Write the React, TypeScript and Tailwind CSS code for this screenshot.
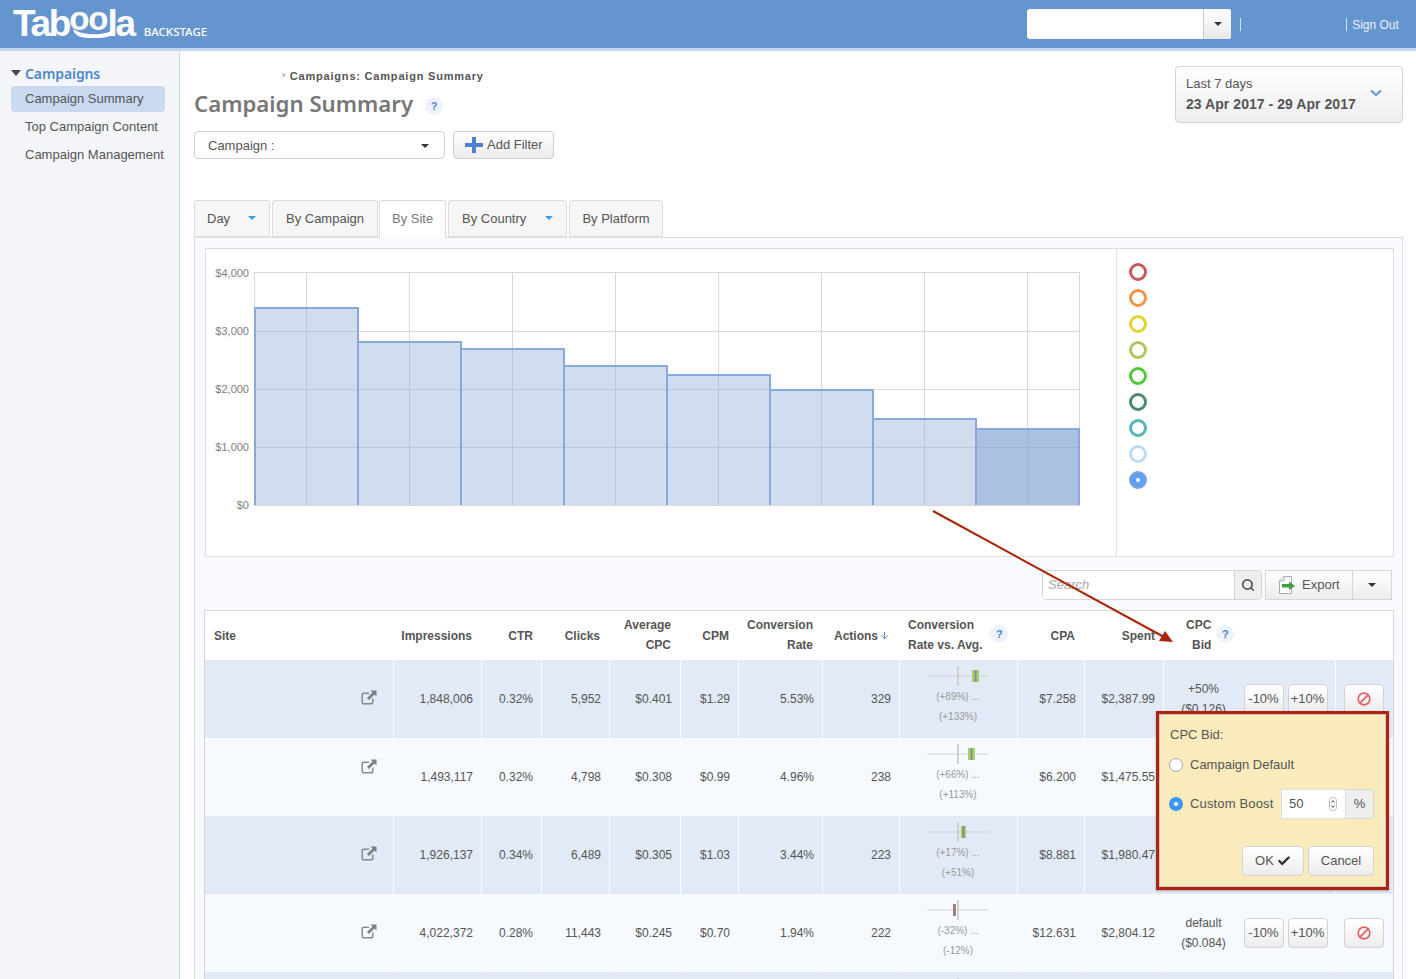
import { Search, Ban, Check, ArrowDown } from 'lucide-react'

const legend = ['#c85a5f', '#f0954a', '#e4d22f', '#a9c95f', '#4fc93a', '#4a8a68', '#56b9b8', '#bcdcf6']

const bars = [
  { x: 255, top: 308 },
  { x: 358, top: 342 },
  { x: 461, top: 349 },
  { x: 564, top: 366 },
  { x: 667, top: 375 },
  { x: 770, top: 390 },
  { x: 873, top: 419 },
  { x: 976, top: 429 },
]

const rows = [
  { imp: '1,848,006', ctr: '0.32%', clicks: '5,952', cpc: '$0.401', cpm: '$1.29', rate: '5.53%', actions: '329', low: '(+89%) ...', high: '(+133%)', box: 45, boxW: 7, boxColor: '#a5d16a', cpa: '$7.258', spent: '$2,387.99', bid: '+50%', bidVal: '($0.126)', icon: 'pb-[3px]' },
  { imp: '1,493,117', ctr: '0.32%', clicks: '4,798', cpc: '$0.308', cpm: '$0.99', rate: '4.96%', actions: '238', low: '(+66%) ...', high: '(+113%)', box: 41, boxW: 7, boxColor: '#a5d16a', cpa: '$6.200', spent: '$1,475.55', icon: 'pb-[21px]' },
  { imp: '1,926,137', ctr: '0.34%', clicks: '6,489', cpc: '$0.305', cpm: '$1.03', rate: '3.44%', actions: '223', low: '(+17%) ...', high: '(+51%)', box: 34, boxW: 5, boxColor: '#a5d16a', cpa: '$8.881', spent: '$1,980.47', icon: 'pb-[3px]' },
  { imp: '4,022,372', ctr: '0.28%', clicks: '11,443', cpc: '$0.245', cpm: '$0.70', rate: '1.94%', actions: '222', low: '(-32%) ...', high: '(-12%)', box: 26, boxW: 3, boxColor: '#c4686a', cpa: '$12.631', spent: '$2,804.12', bid: 'default', bidVal: '($0.084)', icon: 'pb-[3px]' },
]

const MiniChart = ({ box, boxW, boxColor }: { box: number; boxW: number; boxColor: string }) => (
  <svg width="62" height="22" viewBox="0 0 62 22" className="mx-auto block">
    <line x1="0" y1="11" x2="62" y2="11" stroke="#cfcfcf" />
    <line x1="31" y1="1" x2="31" y2="21" stroke="#cfcfcf" strokeWidth="2" />
    <rect x={box} y="5" width={boxW} height="12" fill={boxColor} />
    <rect x={box + boxW / 2 - 1} y="5" width="2" height="12" fill="#8a8f8a" />
  </svg>
)

const LinkIcon = () => (
  <svg width="16" height="15" viewBox="0 0 16 15">
    <path d="M8 3.2 H3 Q1.2 3.2 1.2 5 V12 Q1.2 13.8 3 13.8 H10 Q11.8 13.8 11.8 12 V8.5" fill="none" stroke="#8a8a8a" strokeWidth="1.5" />
    <path d="M9.5 .5 H15.5 V6.5 L13.4 4.5 L8 10 L6 8 L11.5 2.5 Z" fill="#7f7f7f" />
  </svg>
)

const Help = () => (
  <span className="inline-flex h-[18px] w-[18px] items-center justify-center rounded-full bg-[#edf2fb] text-[11px] font-bold text-[#4a7fd6]">?</span>
)

const Caret = ({ color = 'border-t-[#333]' }: { color?: string }) => (
  <span className={`inline-block h-0 w-0 border-x-[4px] border-t-[4px] border-x-transparent ${color}`} />
)

const SmallButton = ({ children, className = '' }: { children: React.ReactNode; className?: string }) => (
  <button className={`flex h-[30px] items-center justify-center rounded-[4px] border border-[#d2d2d2] bg-gradient-to-b from-white to-[#ececec] text-[13px] text-[#555] ${className}`}>
    {children}
  </button>
)

const Tab = ({ label, width, active, caret }: { label: string; width: string; active?: boolean; caret?: boolean }) => (
  <div className={`flex items-center justify-between whitespace-nowrap rounded-t-[3px] border border-[#dddddd] px-[12px] text-[13px] ${width} ${active ? 'h-[38px] -mb-[1px] border-b-[#f8faff] bg-white text-[#777]' : 'h-[37px] bg-[#f6f6f6] text-[#555]'}`}>
    <span>{label}</span>
    {caret && <span className="mb-[1px] mr-[1px] flex"><Caret color="border-t-[#3d9be0]" /></span>}
  </div>
)

const Th = ({ children, className = '' }: { children: React.ReactNode; className?: string }) => (
  <th className={`pr-[9px] text-right align-middle text-[12px] font-bold leading-[20px] text-[#555] ${className}`}>{children}</th>
)

const Td = ({ children, className = '' }: { children: React.ReactNode; className?: string }) => (
  <td className={`border-r border-white/80 pr-[7.5px] text-right align-middle text-[12px] text-[#555] ${className}`}>{children}</td>
)

export default function App() {
  return (
    <div className="relative h-[979px] w-[1416px] overflow-hidden bg-white font-['Liberation_Sans',sans-serif] text-[#555]">
      {/* Header */}
      <header className="flex h-[51px] items-start border-b-[3px] border-[#c3d5ec] bg-[#6595ce]">
        <div className="relative ml-[13px] mt-[4px] flex h-[40px] items-start text-[37px] font-bold leading-[40px] tracking-[-2.3px] text-white">
          <span>Tab</span>
          <span className="-mt-[5px] text-[33px] tracking-[-1px]">oo</span>
          <span>la</span>
          <svg width="46" height="12" viewBox="0 0 46 12" className="absolute left-[58px] top-[23px]">
            <path d="M2 2 C12 9 34 9 44 2 C42 10 36 11 23 11 C10 11 4 10 2 2 Z" fill="white" />
          </svg>
        </div>
        <span className="ml-[10px] mt-[24px] font-['Noto_Sans',sans-serif] text-[11.5px] font-medium leading-[16px] text-white">BACKSTAGE</span>
        <div className="ml-[820px] mt-[9px] flex h-[30px] w-[204px] overflow-hidden rounded-[3px] bg-white">
          <div className="flex-1" />
          <div className="flex w-[28px] items-center justify-center border-l border-[#cccccc] bg-gradient-to-b from-white to-[#e8e8e8]">
            <Caret />
          </div>
        </div>
        <span className="ml-[9px] mt-[18px] h-[13px] w-px bg-[#d5e2f2]" />
        <span className="ml-[105px] mt-[18px] h-[13px] w-px bg-[#d5e2f2]" />
        <span className="ml-[5px] mt-[17px] text-[12px] leading-[16px] text-[#e9f0f9]">Sign Out</span>
      </header>

      <div className="flex">
        {/* Sidebar */}
        <aside className="h-[928px] w-[180px] shrink-0 border-r border-[#c9d9ec] bg-[#f4f5f8] pl-[11px] pt-[12px]">
          <div className="flex h-[20px] items-center">
            <span className="h-0 w-0 border-x-[5px] border-t-[6px] border-x-transparent border-t-[#444]" />
            <span className="ml-[4px] font-['Noto_Sans',sans-serif] text-[14px] font-semibold tracking-[-0.1px] text-[#4e88cf]">Campaigns</span>
          </div>
          <div className="mt-[3px] flex h-[26px] w-[154px] items-center rounded-[4px] bg-[#c9d9f0] pl-[14px] text-[13px]">Campaign Summary</div>
          <div className="mt-[2px] flex h-[26px] items-center pl-[14px] text-[13px]">Top Campaign Content</div>
          <div className="mt-[2px] flex h-[26px] items-center pl-[14px] text-[13px]">Campaign Management</div>
        </aside>

        {/* Main */}
        <main className="w-[1236px] pl-[14px] pr-[13px]">
          <div className="flex h-[149px] justify-between pt-[15px]">
            <div>
              <div className="ml-[88px] flex h-[20px] items-center text-[11px] font-bold tracking-[0.8px] text-[#555]">
                <span className="mr-[4px] text-[9px] font-normal">›</span>Campaigns: Campaign Summary
              </div>
              <div className="mt-[1px] flex h-[34px] items-center">
                <h1 className="font-['Noto_Sans',sans-serif] text-[22.2px] font-semibold leading-[34px] text-[#777]">Campaign Summary</h1>
                <span className="ml-[12px] mt-[2px]"><Help /></span>
              </div>
              <div className="mt-[10px] flex gap-[8px]">
                <div className="flex h-[28px] w-[251px] items-center justify-between rounded-[4px] border border-[#cfcfcf] bg-white pl-[13px] pr-[15px] pt-[1px] text-[13px]">
                  <span>Campaign :</span>
                  <Caret />
                </div>
                <button className="flex h-[28px] w-[101px] items-center rounded-[4px] border border-[#cfcfcf] bg-gradient-to-b from-white to-[#ececec] pl-[11px] text-[13px] text-[#555]">
                  <svg width="18" height="16" viewBox="0 0 18 16" className="mr-[4px]">
                    <path d="M7 0h4v6h7v4h-7v6H7v-6H0V6h7z" fill="#4f80cf" />
                  </svg>
                  Add Filter
                </button>
              </div>
            </div>
            <div className="flex h-[57px] w-[228px] items-center justify-between rounded-[4px] border border-[#d5d5d5] bg-gradient-to-b from-white to-[#eeeeee] pl-[10px] pr-[20px]">
              <div className="-mt-[2px]">
                <div className="text-[13px] leading-[21px]">Last 7 days</div>
                <div className="text-[14px] font-bold leading-[21px] tracking-[0.05px]">23 Apr 2017 - 29 Apr 2017</div>
              </div>
              <svg width="12" height="8" viewBox="0 0 12 8" className="mb-[3px]">
                <path d="M1 1.5 L6 6 L11 1.5" fill="none" stroke="#5b95d6" strokeWidth="2" />
              </svg>
            </div>
          </div>

          {/* Tabs */}
          <div className="flex gap-[2px]">
            <Tab label="Day" width="w-[76px]" caret />
            <Tab label="By Campaign" width="w-[106px] !px-[11px] justify-center" />
            <div className="-ml-px"><Tab label="By Site" width="w-[67px]" active /></div>
            <Tab label="By Country" width="w-[119px] !pl-[13px]" caret />
            <Tab label="By Platform" width="w-[94px] justify-center" />
          </div>

          <section className="h-[800px] border border-[#dddddd] bg-[#f8faff] pl-[10px] pr-[9px] pt-[10px]">
            {/* Chart */}
            <div className="flex h-[309px] w-[1189px] border border-[#dedede] bg-white">
              <svg width="910" height="307" viewBox="206 249 910 307" className="shrink-0 font-['Liberation_Sans',sans-serif]">
                {[272, 331, 389, 447, 505].map((y) => (
                  <line key={y} x1="254" x2="1080" y1={y + 0.5} y2={y + 0.5} stroke="#d8d8d8" />
                ))}
                {[254, 306, 409, 512, 615, 718, 821, 924, 1027, 1079].map((x) => (
                  <line key={x} x1={x + 0.5} x2={x + 0.5} y1="272" y2="505" stroke="#d8d8d8" />
                ))}
                {bars.map((b, i) => (
                  <g key={b.x}>
                    <rect x={b.x} y={b.top} width="103" height={505 - b.top} fill={i === 7 ? '#7d9fd3' : '#99b3dc'} fillOpacity={i === 7 ? 0.65 : 0.45} />
                    <path d={`M${b.x} 505 V${b.top} H${b.x + 103} V505`} fill="none" stroke="#88a9db" strokeWidth="2" />
                  </g>
                ))}
                {[['$4,000', 277], ['$3,000', 335], ['$2,000', 393], ['$1,000', 451], ['$0', 509]].map(([t, y]) => (
                  <text key={t} x="249" y={y} textAnchor="end" fontSize="11" fill="#808080">{t}</text>
                ))}
              </svg>
              <div className="flex-1 border-l border-[#e2e2e2] pl-[12px] pt-[14px]">
                <div className="flex flex-col gap-[8px]">
                  {legend.map((c) => (
                    <span key={c} className="h-[18px] w-[18px] rounded-full border-[3.5px] bg-white" style={{ borderColor: c }} />
                  ))}
                  <span className="flex h-[18px] w-[18px] items-center justify-center rounded-full border-[2px] border-[#7e9fdb] bg-[#5da0f5]">
                    <span className="h-[4px] w-[4px] rounded-full bg-white" />
                  </span>
                </div>
              </div>
            </div>

            {/* Toolbar */}
            <div className="mt-[13px] flex h-[30px] w-[1187px] justify-end gap-[3px]">
              <div className="flex w-[220px] overflow-hidden rounded-[4px] border border-[#d5d5d5] bg-white">
                <input placeholder="Search" className="w-[191px] bg-white pl-[5px] text-[13px] italic outline-none placeholder:text-[#aaaaaa]" />
                <div className="flex flex-1 items-center justify-center border-l border-[#d5d5d5] bg-[#efefef]">
                  <Search size={14} strokeWidth={3} color="#555" />
                </div>
              </div>
              <div className="flex w-[127px] border border-[#d5d5d5] bg-gradient-to-b from-white to-[#ececec]">
                <div className="flex w-[87px] items-center border-r border-[#d5d5d5] pl-[12px] text-[13px]">
                  <svg width="18" height="18" viewBox="0 0 18 18" className="mr-[6px] shrink-0">
                    <path d="M1.5 5 L6 .5 H13.5 V17.5 H1.5 Z" fill="white" stroke="#aaa" />
                    <path d="M6 .5 V5 H1.5" fill="none" stroke="#aaa" />
                    <path d="M4 8 H11 V5.5 L17 10 L11 14 V11.5 H4 Z" fill="#3fa13c" />
                  </svg>
                  Export
                </div>
                <div className="flex flex-1 items-center justify-center"><Caret /></div>
              </div>
            </div>

            {/* Table */}
            <div className="-ml-px mt-[10px] w-[1190px] border border-[#d6d6d6] bg-white">
              <table className="w-[1188px] table-fixed border-collapse">
                <colgroup>
                  <col className="w-[188px]" />
                  <col className="w-[88px]" />
                  <col className="w-[60px]" />
                  <col className="w-[68px]" />
                  <col className="w-[71px]" />
                  <col className="w-[58px]" />
                  <col className="w-[84px]" />
                  <col className="w-[77px]" />
                  <col className="w-[118px]" />
                  <col className="w-[67px]" />
                  <col className="w-[79px]" />
                  <col className="w-[172px]" />
                  <col className="w-[58px]" />
                </colgroup>
                <thead>
                  <tr className="h-[49px]">
                    <Th className="pl-[9px] !text-left">Site</Th>
                    <Th>Impressions</Th>
                    <Th className="!pr-[8px]">CTR</Th>
                    <Th>Clicks</Th>
                    <Th className="pb-[2px]">Average<br />CPC</Th>
                    <Th>CPM</Th>
                    <Th className="pb-[2px]">Conversion<br />Rate</Th>
                    <Th className="!pr-[9px]">
                      <span className="inline-flex items-center">Actions<ArrowDown size={11} color="#4e88cf" className="ml-[1px]" /></span>
                    </Th>
                    <Th className="!pr-0 !text-left pb-[2px]">
                      <div className="flex items-center pl-[9px]">
                        <span>Conversion<br />Rate vs. Avg.</span>
                        <span className="ml-[8px] -mt-[1px]"><Help /></span>
                      </div>
                    </Th>
                    <Th>CPA</Th>
                    <Th className="!pr-[8px]">Spent</Th>
                    <Th className="!pr-0 pb-[2px]">
                      <div className="flex items-center pl-[23px]">
                        <span className="text-right">CPC<br />Bid</span>
                        <span className="ml-[5px] -mt-[1px]"><Help /></span>
                      </div>
                    </Th>
                    <Th> </Th>
                  </tr>
                </thead>
                <tbody>
                  {rows.map((r, i) => (
                    <tr key={r.imp} className={`h-[78px] ${i % 2 === 0 ? 'bg-[#e1eaf6]' : 'bg-[#f6f9fe]'}`}>
                      <Td>
                        <div className={`flex justify-end pr-[8px] ${r.icon}`}>
                          <LinkIcon />
                        </div>
                      </Td>
                      <Td>{r.imp}</Td>
                      <Td>{r.ctr}</Td>
                      <Td>{r.clicks}</Td>
                      <Td>{r.cpc}</Td>
                      <Td>{r.cpm}</Td>
                      <Td>{r.rate}</Td>
                      <Td>{r.actions}</Td>
                      <Td className="!pr-0 !pt-[5px] !align-top !text-center">
                        <MiniChart box={r.box} boxW={r.boxW} boxColor={r.boxColor} />
                        <div className="text-[10px] leading-[20px] text-[#999]">{r.low}<br />{r.high}</div>
                      </Td>
                      <Td>{r.cpa}</Td>
                      <Td>{r.spent}</Td>
                      <Td className="!pr-0">
                        {r.bid && (
                          <div className="flex items-center">
                            <div className="w-[80px] text-center leading-[20px]">{r.bid}<br />{r.bidVal}</div>
                            <div className="flex gap-[4px]">
                              <SmallButton className="w-[40px]">-10%</SmallButton>
                              <SmallButton className="w-[40px]">+10%</SmallButton>
                            </div>
                          </div>
                        )}
                      </Td>
                      <td className="align-middle">
                        {r.bid && (
                          <SmallButton className="ml-[8px] w-[40px]"><Ban size={14} strokeWidth={3} color="#e5626c" className="-scale-x-100" /></SmallButton>
                        )}
                      </td>
                    </tr>
                  ))}
                  <tr className="h-[78px] bg-[#e1eaf6]">
                    <td colSpan={8} />
                    <td className="align-top pt-[5px]"><MiniChart box={26} boxW={3} boxColor="#c4686a" /></td>
                    <td colSpan={4} />
                  </tr>
                </tbody>
              </table>
            </div>
          </section>
        </main>
      </div>

      {/* Annotation arrow */}
      <svg width="1416" height="979" viewBox="0 0 1416 979" className="pointer-events-none absolute left-0 top-0">
        <line x1="933" y1="511" x2="1164" y2="637" stroke="#ae2208" strokeWidth="2" />
        <polygon points="1159,641 1173,642 1165,631" fill="#ae2208" />
      </svg>

      {/* CPC bid popover */}
      <div className="absolute left-[1156px] top-[711px] h-[179px] w-[233px] border-[3px] border-[#b2210d] shadow-[0_1px_2px_rgba(0,0,0,0.3)]">
        <div className="flex h-full flex-col border border-[#c9c9c9] bg-[#f9ebbc] pl-[9px] pr-[11px] text-[13px]">
          <div className="ml-[1px] mt-[11px] leading-[18px]">CPC Bid:</div>
          <div className="mt-[12px] flex h-[18px] items-center">
            <span className="h-[14px] w-[14px] rounded-full border border-[#aaaaaa] bg-white" />
            <span className="ml-[7px]">Campaign Default</span>
          </div>
          <div className="mt-[15px] flex h-[30px] items-center">
            <span className="flex h-[14px] w-[14px] items-center justify-center rounded-full bg-[#3d97f2]">
              <span className="h-[4px] w-[4px] rounded-full bg-white" />
            </span>
            <span className="ml-[7px] w-[91px] tracking-[0.15px]">Custom Boost</span>
            <div className="flex h-[30px] w-[65px] items-center border border-[#dddddd] bg-white pl-[7px]">
              <span className="flex-1">50</span>
              <svg width="8" height="14" viewBox="0 0 8 14" className="mr-[8px]">
                <rect x=".5" y=".5" width="7" height="13" rx="3" fill="#fff" stroke="#bbb" />
                <path d="M2.5 5.5 L4 3.5 L5.5 5.5 M2.5 8.5 L4 10.5 L5.5 8.5" fill="none" stroke="#555" />
              </svg>
            </div>
            <div className="flex h-[30px] w-[28px] items-center justify-center rounded-r-[4px] border border-l-0 border-[#d5d5d5] bg-[#eeeeee]">%</div>
          </div>
          <div className="mt-[27px] flex justify-end gap-[4px]">
            <SmallButton className="w-[62px] gap-[3px]">OK<Check size={14} strokeWidth={4} color="#333" /></SmallButton>
            <SmallButton className="w-[66px]">Cancel</SmallButton>
          </div>
        </div>
      </div>
    </div>
  )
}
